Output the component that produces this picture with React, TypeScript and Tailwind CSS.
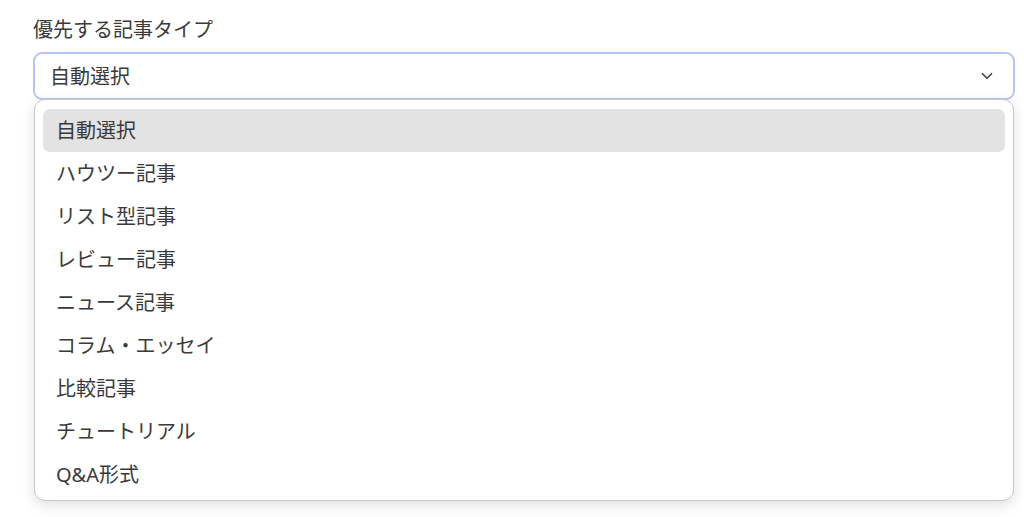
import React from "react";
import { ChevronDown } from "lucide-react";

const items = [
  "自動選択",
  "ハウツー記事",
  "リスト型記事",
  "レビュー記事",
  "ニュース記事",
  "コラム・エッセイ",
  "比較記事",
  "チュートリアル",
  "Q&A形式",
];

export default function App() {
  return (
    <div
      className="w-[1024px] h-[517px] bg-white overflow-hidden relative text-[#333333]"
      style={{ fontFamily: '"Noto Sans", "Noto Sans CJK JP", sans-serif' }}
    >
      <div className="pl-[33px] pr-[9px] pt-[17px]">
        <div className="text-[20px] leading-[26px] text-[#3a3a3a]">優先する記事タイプ</div>
        <div className="relative mt-[9px]">
          <div className="h-[48px] rounded-[9px] border-[2px] border-[#b9c3f5] bg-white flex items-center justify-between pl-[15px] pr-[16px]">
            <span className="text-[20px] text-[#3a3a3a] mt-[2px]">自動選択</span>
            <ChevronDown size={18} strokeWidth={2.2} className="text-[#444] mr-[1px]" />
          </div>
          <div className="absolute left-[1px] right-[1px] top-[47px] h-[402px] bg-white rounded-[11px] border border-[#c8c8c8] shadow-[0_4px_14px_rgba(0,0,0,0.12)] pt-[9px] px-[8px] flex flex-col">
            {items.map((t, i) => (
              <div
                key={t}
                className={
                  "h-[43px] shrink-0 flex items-center pl-[13px] rounded-[7px] text-[20px] text-[#3a3a3a] " +
                  (i === 0 ? "bg-[#e3e3e3]" : "")
                }
              >
                {t}
              </div>
            ))}
          </div>
        </div>
      </div>
    </div>
  );
}
